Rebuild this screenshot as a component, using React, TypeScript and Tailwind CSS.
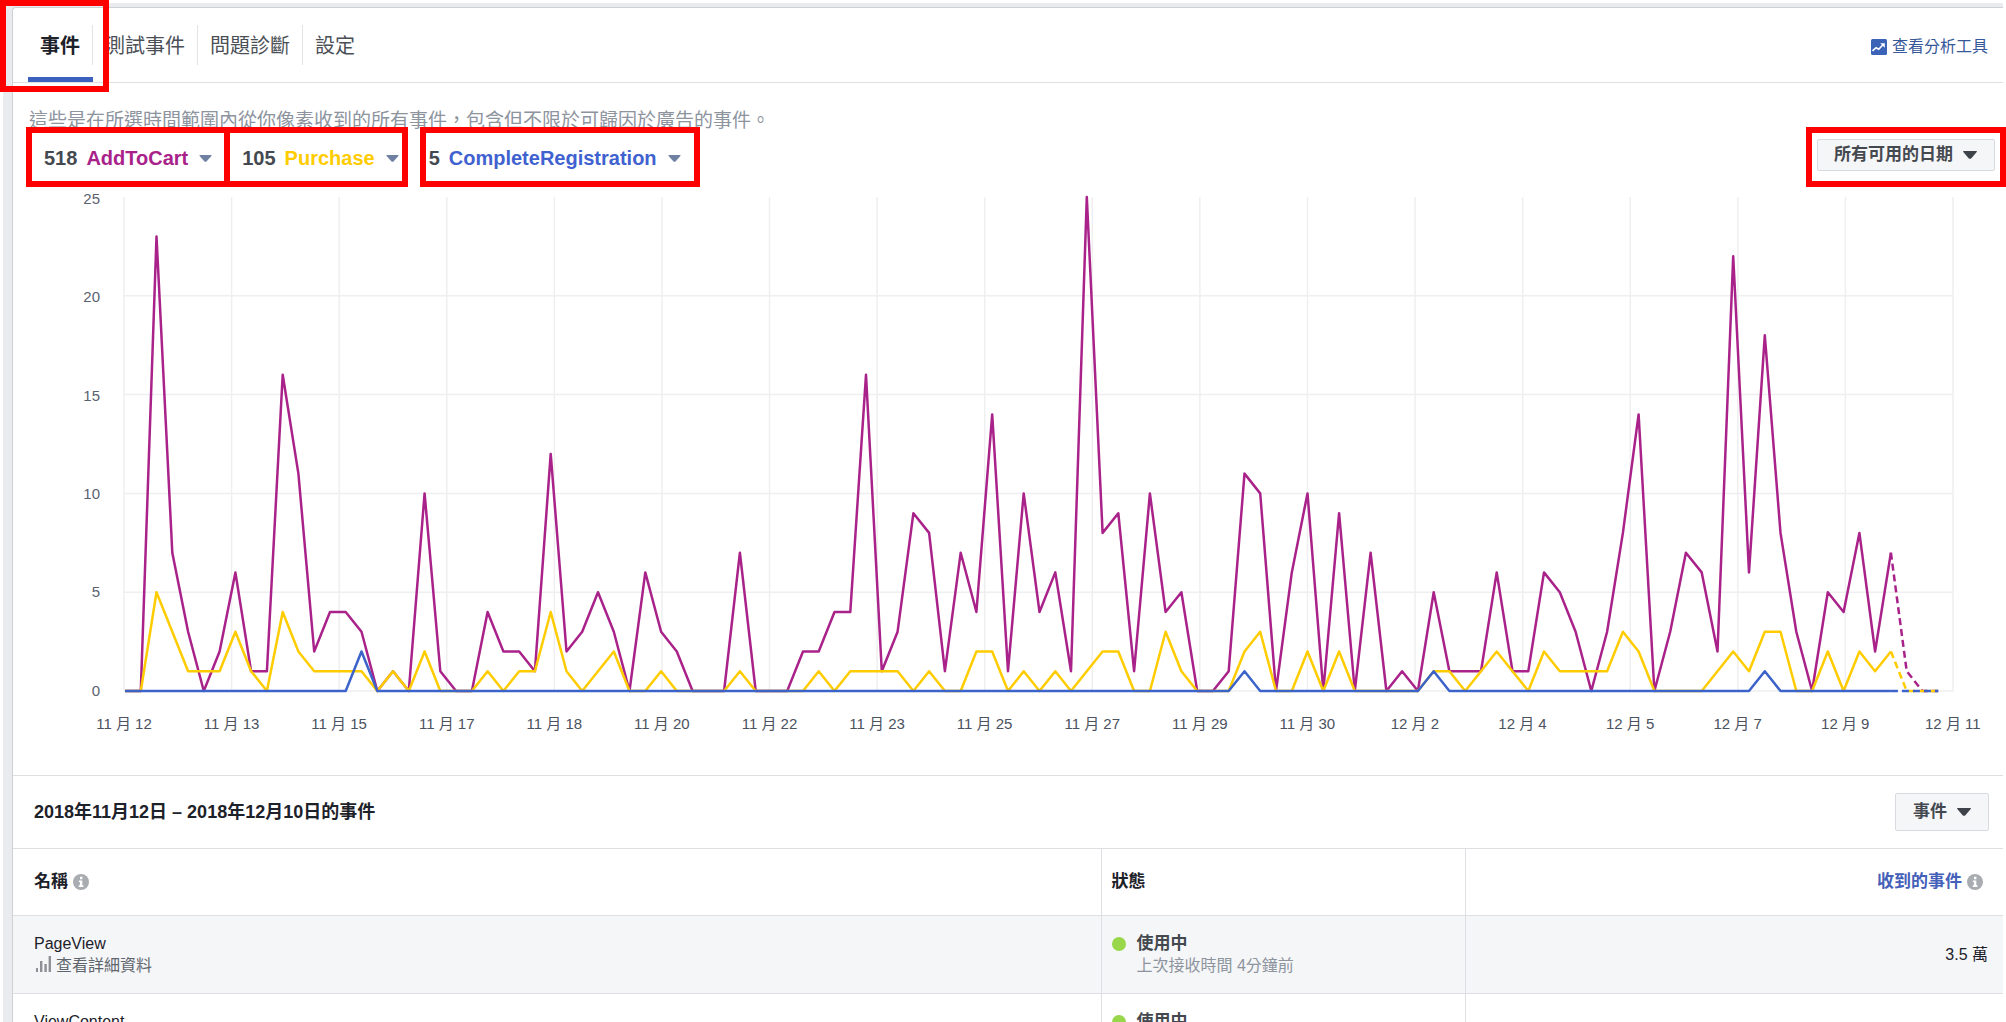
import React from "react";

const PURCHASE_COLOR = "#ffcc00";
const CART_COLOR = "#a9228a";
const REGISTRATION_COLOR = "#3b63c9";

const addToCart = [
  0, 0, 23, 7, 3, 0, 2, 6, 1, 1, 16, 11, 2, 4, 4, 3, 0, 1, 0, 10, 1, 0, 0, 4, 2, 2, 1, 12, 2, 3,
  5, 3, 0, 6, 3, 2, 0, 0, 0, 7, 0, 0, 0, 2, 2, 4, 4, 16, 1, 3, 9, 8, 1, 7, 4, 14, 1, 10, 4, 6,
  1, 25, 8, 9, 1, 10, 4, 5, 0, 0, 1, 11, 10, 0, 6, 10, 0, 9, 0, 7, 0, 1, 0, 5, 1, 1, 1, 6, 1, 1,
  6, 5, 3, 0, 3, 8, 14, 0, 3, 7, 6, 2, 22, 6, 18, 8, 3, 0, 5, 4, 8, 2, 7, 1, 0, 0,
];

const purchase = [
  0, 0, 5, 3, 1, 1, 1, 3, 1, 0, 4, 2, 1, 1, 1, 1, 0, 1, 0, 2, 0, 0, 0, 1, 0, 1, 1, 4, 1, 0,
  1, 2, 0, 0, 1, 0, 0, 0, 0, 1, 0, 0, 0, 0, 1, 0, 1, 1, 1, 1, 0, 1, 0, 0, 2, 2, 0, 1, 0, 1,
  0, 1, 2, 2, 0, 0, 3, 1, 0, 0, 0, 2, 3, 0, 0, 2, 0, 2, 0, 0, 0, 0, 0, 1, 1, 0, 1, 2, 1, 0,
  2, 1, 1, 1, 1, 3, 2, 0, 0, 0, 0, 1, 2, 1, 3, 3, 0, 0, 2, 0, 2, 1, 2, 0, 0, 0,
];

const registrationPeaks: Record<number, number> = { 15: 2, 71: 1, 83: 1, 104: 1 };
const completeRegistration = addToCart.map((_, i) => registrationPeaks[i] ?? 0);

const dates = [
  "11 月 12", "11 月 13", "11 月 15", "11 月 17", "11 月 18", "11 月 20", "11 月 22", "11 月 23", "11 月 25",
  "11 月 27", "11 月 29", "11 月 30", "12 月 2", "12 月 4", "12 月 5", "12 月 7", "12 月 9", "12 月 11",
];

const PLOT_W = 1829;
const PLOT_H = 494;
const START = 1;
const STEP = 15.767;
const LAST_SOLID = 112;

function toPoints(values: number[], from: number, to: number) {
  return values
    .slice(from, to + 1)
    .map((v, i) => `${(START + (from + i) * STEP).toFixed(1)},${(PLOT_H - (v * PLOT_H) / 25).toFixed(1)}`)
    .join(" ");
}

function Series({ values, color }: { values: number[]; color: string }) {
  const line = { fill: "none", stroke: color, strokeWidth: 2.5, vectorEffect: "non-scaling-stroke" as const };
  return (
    <g>
      <polyline {...line} strokeLinejoin="round" points={toPoints(values, 0, LAST_SOLID)} />
      <polyline {...line} strokeDasharray="7 4" points={toPoints(values, LAST_SOLID, values.length - 1)} />
    </g>
  );
}

function Chart() {
  return (
    <div className="flex pr-[50px]">
      <div className="flex h-[494px] w-[87px] flex-col justify-between pt-0.5 text-right text-[15px] text-[#5a6270]">
        {[25, 20, 15, 10, 5, 0].map((n) => (
          <div key={n} className="flex h-0 items-center justify-end">
            {n}
          </div>
        ))}
      </div>
      <div className="ml-6 min-w-0 flex-1">
        <svg
          className="block h-[494px] w-full overflow-visible"
          viewBox={`0 0 ${PLOT_W} ${PLOT_H}`}
          preserveAspectRatio="none"
          role="img"
          aria-label="事件數量"
        >
          <g stroke="#efeff1" strokeWidth="1.5">
            {dates.map((d, i) => (
              <line key={d} x1={(i * PLOT_W) / 17} x2={(i * PLOT_W) / 17} y1="0" y2={PLOT_H} vectorEffect="non-scaling-stroke" />
            ))}
            {[5, 10, 15, 20].map((n) => (
              <line key={n} x1="0" x2={PLOT_W} y1={PLOT_H - (n * PLOT_H) / 25} y2={PLOT_H - (n * PLOT_H) / 25} vectorEffect="non-scaling-stroke" />
            ))}
            <line x1="0" x2={PLOT_W} y1={PLOT_H} y2={PLOT_H} vectorEffect="non-scaling-stroke" />
          </g>
          <Series values={addToCart} color={CART_COLOR} />
          <Series values={purchase} color={PURCHASE_COLOR} />
          <Series values={completeRegistration} color={REGISTRATION_COLOR} />
        </svg>
        <div className="mt-[21px] flex justify-between text-[15px] leading-6 text-[#4b5260]">
          {dates.map((d) => (
            <div key={d} className="flex w-0 justify-center whitespace-nowrap">
              {d}
            </div>
          ))}
        </div>
      </div>
    </div>
  );
}

function Highlight({ className }: { className: string }) {
  return <span aria-hidden="true" className={`pointer-events-none absolute z-10 border-6 border-[#ff0000] ${className}`} />;
}

function Caret({ className }: { className: string }) {
  return (
    <svg className={className} viewBox="0 0 14 8" aria-hidden="true">
      <path d="M0.6 0h12.8q.9.2.3 1L8.4 7.2q-1.4 1.2-2.8 0L.3 1Q-.3.2.6 0z" fill="currentColor" />
    </svg>
  );
}

function InfoIcon() {
  return (
    <svg className="h-4 w-4 shrink-0" viewBox="0 0 16 16" aria-hidden="true">
      <circle cx="8" cy="8" r="8" fill="#a9acb1" />
      <path d="M7 2.8h2.4v2.4H7zM5.8 6.4h3.5v4.9h1.1V13H5.8v-1.7h1.1V8.1H5.8z" fill="#fff" />
    </svg>
  );
}

function BarsIcon() {
  return (
    <svg className="mb-1 ml-0.5 h-4 w-[15px] shrink-0" viewBox="0 0 15 16" aria-hidden="true" fill="#8d9196">
      <path d="M0 12h2v4H0zM4 5h2.4v11H4zM8.4 8h2.4v8H8.4zM12.6 0H15v16h-2.4z" />
    </svg>
  );
}

function AnalyticsIcon() {
  return (
    <svg className="h-4 w-4" viewBox="0 0 16 16" aria-hidden="true">
      <rect width="16" height="16" rx="1.5" fill="#3b63b8" />
      <path d="M1.5 11.8l3.6-3.1 2.6 1.5 4.3-4.4" fill="none" stroke="#fff" strokeWidth="1.6" />
      <path d="M9.2 4.2h4.6v4.6z" fill="#fff" />
    </svg>
  );
}

function Dropdown({ label, text, className }: { label: string; text: string; className: string }) {
  return (
    <div className="relative">
      <select
        aria-label={label}
        className={`block appearance-none rounded-xs border border-[#d8dadf] bg-[#f5f6f7] text-[17px] font-bold text-[#444950] ${className}`}
      >
        <option>{text}</option>
      </select>
      <Caret className="pointer-events-none absolute top-1/2 right-[18px] h-2 w-3.5 -translate-y-1/2 text-[#3e434a]" />
    </div>
  );
}

function Metric({ count, name, color, box }: { count: number; name: string; color: string; box: string }) {
  return (
    <button type="button" className="relative flex h-6 items-center text-xl leading-6 font-bold whitespace-nowrap">
      <span className="text-[#444950]">{count}</span>
      <span className={`ml-[9px] ${color}`}>{name}</span>
      <Caret className="ml-[11px] h-[7px] w-[13px] text-[#6f80a3]" />
      <Highlight className={`-top-[19px] -bottom-[17px] ${box}`} />
    </button>
  );
}

function EventRow({ name, count, shaded }: { name: string; count: string; shaded?: boolean }) {
  return (
    <tr className={`h-[78px] border-b border-[#dddfe2] ${shaded ? "bg-[#f5f6f8]" : "bg-white"}`}>
      <td className="pl-[21px]">
        <div className="text-base leading-[22px] text-[#1d2129]">{name}</div>
        <a href="#details" className="flex h-[22px] items-center gap-[5px] text-base leading-[22px] text-[#5f656d]">
          <BarsIcon />
          查看詳細資料
        </a>
      </td>
      <td className="border-x border-[#dddfe2] pl-2.5">
        <div className="flex items-center gap-[11px] text-[17px] leading-[22px] font-bold text-[#444950]">
          <span className="h-3.5 w-3.5 rounded-full bg-[#98d64a]" />
          使用中
        </div>
        <div className="pl-[25px] text-base leading-[22px] text-[#8d949e]">上次接收時間 4分鐘前</div>
      </td>
      <td className="pr-[15px] text-right text-base text-[#1d2129]">{count}</td>
    </tr>
  );
}

const tabs = ["事件", "測試事件", "問題診斷", "設定"];

export default function App() {
  return (
    <div className="h-screen overflow-hidden bg-white px-[3px] pt-[3px] font-['Liberation_Sans','Noto_Sans_CJK_TC',sans-serif]">
      <div className="min-h-full bg-[#e9ebee] pt-1 pl-[9px]">
        <main className="min-h-screen rounded-tl border-t border-l border-[#cfd1d6] bg-white">
          <header className="flex h-[75px] items-stretch justify-between border-b border-[#dddfe2] pr-[15px] pl-[15px]">
            <nav className="flex items-stretch" aria-label="分頁">
              {tabs.map((tab, i) => (
                <button
                  key={tab}
                  type="button"
                  className={`relative flex items-center text-xl ${i === 0 ? "font-bold text-[#1d2129]" : "text-[#4b4f56]"}`}
                >
                  <span className={`flex h-10 items-center px-3 pt-0.5 ${i < 3 ? "border-r border-[#e3e4e8]" : ""}`}>{tab}</span>
                  {i === 0 && (
                    <>
                      <span className="absolute right-0 bottom-0 left-0 h-[5px] bg-[#3b60bd]" />
                      <Highlight className="-top-2 -right-4 -bottom-2.5 -left-7" />
                    </>
                  )}
                </button>
              ))}
            </nav>
            <a href="#analytics" className="flex items-center gap-[5px] pt-1 text-base text-[#365899]">
              <AnalyticsIcon />
              查看分析工具
            </a>
          </header>

          <section className="pt-6 pb-[39px]">
            <p className="pl-4 text-[19px] leading-7 text-[#8d949e]">
              這些是在所選時間範圍內從你像素收到的所有事件，包含但不限於可歸因於廣告的事件。
            </p>
            <div className="mb-[22px] flex h-10 items-center justify-between pr-2 pl-[31px]">
              <div className="flex gap-[30px] pt-1.5">
                <Metric count={518} name="AddToCart" color="text-[#a9228a]" box="-left-[18px] -right-[18px]" />
                <Metric count={105} name="Purchase" color="text-[#ffcc00]" box="-left-[18px] -right-[9px]" />
                <Metric count={5} name="CompleteRegistration" color="text-[#3f62d0]" box="-left-[9px] -right-[19px]" />
              </div>
              <div className="relative">
                <Dropdown label="日期範圍" text="所有可用的日期" className="h-8 w-[178px] pl-4" />
                <Highlight className="-top-3 -right-[11px] -bottom-4 -left-[11px]" />
              </div>
            </div>
            <Chart />
          </section>

          <section className="border-t border-[#dddfe2]">
            <div className="flex h-[72px] items-center justify-between pr-3.5 pl-[21px]">
              <h2 className="text-lg font-bold text-[#1d2129]">2018年11月12日 – 2018年12月10日的事件</h2>
              <Dropdown label="篩選類型" text="事件" className="h-[38px] w-[94px] pl-[17px]" />
            </div>
            <table className="w-full table-fixed border-collapse border-t border-[#dddfe2]">
              <colgroup>
                <col />
                <col className="w-[364px]" />
                <col className="w-[538px]" />
              </colgroup>
              <thead>
                <tr className="h-[67px] border-b border-[#dddfe2] text-[17px] text-[#1d2129]">
                  <th scope="col" className="pl-[21px]">
                    <span className="flex items-center gap-[5px]">
                      名稱
                      <InfoIcon />
                    </span>
                  </th>
                  <th scope="col" className="border-x border-[#dddfe2] pl-2.5 text-left">狀態</th>
                  <th scope="col" className="pr-5">
                    <span className="flex items-center justify-end gap-[5px] text-[#4460b8]">
                      收到的事件
                      <InfoIcon />
                    </span>
                  </th>
                </tr>
              </thead>
              <tbody>
                <EventRow name="PageView" count="3.5 萬" shaded />
                <EventRow name="ViewContent" count="" />
              </tbody>
            </table>
          </section>
        </main>
      </div>
    </div>
  );
}
